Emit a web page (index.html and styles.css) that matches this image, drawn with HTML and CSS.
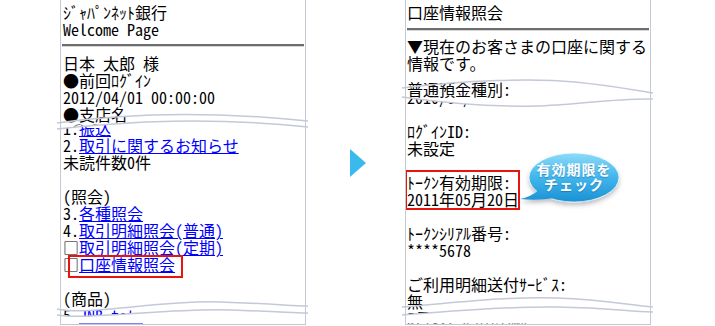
FILE: index.html
```html
<!DOCTYPE html>
<html lang="ja">
<head>
  <meta charset="UTF-8" />
  <meta name="viewport" content="width=device-width, initial-scale=1.0"/>
  <title>口座情報照会</title>
  <link rel="stylesheet" href="styles.css">
</head>
<body>

  <div class="stage">

    <!-- before: menu screen -->
    <div class="phone">
      <div class="seg seg-l-top">
        <div class="row">ｼﾞｬﾊﾟﾝﾈｯﾄ銀行</div>
        <div class="row">Welcome Page</div>
        <hr class="rule rule-l">
        <div class="row">日本 太郎 様</div>
        <div class="row">●前回ﾛｸﾞｲﾝ</div>
        <div class="row">2012/04/01 00:00:00</div>
        <div class="row">●支店名</div>
        <div class="row">&nbsp;○○営業部 (ｲﾁ)</div>
      </div>
      <div class="seg seg-l-bottom">
        <div class="row">1.<a href="#">振込</a></div>
        <div class="row">2.<a href="#">取引に関するお知らせ</a></div>
        <div class="row">未読件数0件</div>
        <div class="row-blank"></div>
        <div class="row">(照会)</div>
        <div class="row">3.<a href="#">各種照会</a></div>
        <div class="row">4.<a href="#">取引明細照会(普通)</a></div>
        <div class="row">□<a href="#">取引明細照会(定期)</a></div>
        <div class="row marked">□<a href="#">口座情報照会</a><span class="mark mark-link"></span></div>
        <div class="row-blank"></div>
        <div class="row">(商品)</div>
        <div class="row">5.<a href="#">JNB-toto</a></div>
      </div>

      <svg class="tear" width="252" height="326" viewBox="0 0 252 326">
        <path class="tear-line" d="M-3,123 C60,114 140,110 248,121"/>
        <path class="tear-line" d="M-3,129 C70,121 150,117 248,127"/>
        <path class="tear-fill" d="M-3,315 C30,320 110,308 170,310 S230,313 248,313 L248,323.5 L-3,323.5 Z"/>
        <path class="tear-line" d="M-3,309 C30,316 100,300 160,302 S230,306 248,306"/>
        <path class="tear-line" d="M-3,315 C30,320 110,308 170,310 S230,313 248,313"/>
        <path class="tear-side" d="M0.5,312 V324 M245.5,312 V324"/>
      </svg>
    </div>

    <div class="arrow"></div>

    <!-- after: account info screen -->
    <div class="phone">
      <div class="seg seg-r-top">
        <div class="row">口座情報照会</div>
        <hr class="rule rule-r">
        <div class="row">▼現在のお客さまの口座に関する</div>
        <div class="row">情報です。</div>
        <div class="row-gap"></div>
        <div class="row">普通預金種別:</div>
      </div>
      <div class="seg seg-r-bottom">
        <div class="row">2010/04/01</div>
        <div class="row-blank"></div>
        <div class="row">ﾛｸﾞｲﾝID:</div>
        <div class="row">未設定</div>
        <div class="row-blank"></div>
        <div class="marked">
          <div class="row">ﾄｰｸﾝ有効期限:</div>
          <div class="row">2011年05月20日</div>
          <span class="mark mark-date"></span>
        </div>
        <div class="row-blank"></div>
        <div class="row">ﾄｰｸﾝｼﾘｱﾙ番号:</div>
        <div class="row">****5678</div>
        <div class="row-blank"></div>
        <div class="row">ご利用明細送付ｻｰﾋﾞｽ:</div>
        <div class="row">無</div>
        <div class="row">5月のご利用明細</div>
      </div>

      <svg class="tear" width="252" height="326" viewBox="0 0 252 326">
        <path class="tear-line" d="M-3,88 C60,80 130,78 170,82 S230,90 248,93"/>
        <path class="tear-line" d="M-3,97 C40,103 90,107 130,106 S210,98 248,99"/>
        <path class="tear-fill" d="M-3,315 C40,312 100,306 152,307 S220,311 248,312 L248,323.5 L-3,323.5 Z"/>
        <path class="tear-line" d="M-3,307 C40,304 100,296 152,298 S220,305 248,307"/>
        <path class="tear-line" d="M-3,315 C40,312 100,306 152,307 S220,311 248,312"/>
        <path class="tear-side" d="M0.5,310 V324 M245.5,310 V324"/>
      </svg>
    </div>

    <!-- callout -->
    <svg class="bubble" width="120" height="76" viewBox="0 0 120 76">
      <defs>
        <linearGradient id="bubbleFill" gradientUnits="userSpaceOnUse" x1="0" y1="5" x2="0" y2="55">
          <stop offset="0" stop-color="#8edbf8"/>
          <stop offset="0.45" stop-color="#45b9ee"/>
          <stop offset="1" stop-color="#1890d3"/>
        </linearGradient>
        <filter id="bubbleShadow" x="-20%" y="-20%" width="140%" height="160%">
          <feDropShadow dx="0" dy="3" stdDeviation="2" flood-color="#404a5a" flood-opacity="0.35"/>
        </filter>
      </defs>
      <g filter="url(#bubbleShadow)">
        <ellipse cx="59" cy="29.5" rx="45" ry="24.5" fill="url(#bubbleFill)" stroke="#ffffff" stroke-opacity="0.7"/>
        <path d="M25,41 Q16,49 5,51 Q22,53 40,50 Z" fill="url(#bubbleFill)"/>
      </g>
    </svg>
    <div class="bubble-text">有効期限を<br>チェック</div>

  </div>

</body>
</html>
```

FILE: styles.css
```css
body {
  margin: 0;
  background: #fff;
  font-family: "Noto Sans CJK JP", sans-serif;
}

.stage {
  position: relative;
  display: flex;
  align-items: flex-start;
  width: 715px;
  height: 326px;
  padding-left: 60px;
  box-sizing: border-box;
  overflow: hidden;
}

.phone {
  position: relative;
  width: 246px;
  height: 325px;
  box-sizing: border-box;
  border-left: 1px solid #c4c9d6;
  border-right: 1px solid #c4c9d6;
  border-bottom: 1px solid #c4c9d6;
  font-size: 16px;
  line-height: 17px;
  color: #000;
  /* half-width latin, like a handset font */
  font-feature-settings: "hwid";
}

.seg {
  overflow: hidden;
  padding-left: 2px;
}

.row {
  white-space: nowrap;
}

.row a {
  color: #0000ff;
  text-decoration: underline;
}

.row-blank {
  height: 17px;
}

.row-gap {
  height: 9px;
}

.rule {
  height: 0;
  border: 0;
  border-top: 2px solid #6e6e6e;
  border-bottom: 1px solid #d2d2d2;
}

.rule-l {
  margin: 6px 1px 8px -1px;
}

.rule-r {
  margin: 7px 1px 7px 0;
}

/* left screen, cut by the tear */
.seg-l-top {
  height: 132px;
  padding-top: 4px;
  box-sizing: border-box;
  clip-path: path("M-4,0 L250,0 L250,127 L247,127 C149,117 69,121 -4,129 Z");
}

.seg-l-bottom {
  margin-top: -17px;
  height: 209px;
  padding-top: 5px;
  box-sizing: border-box;
  clip-path: path("M-4,14 C69,6 149,2 247,12 L250,12 L250,400 L-4,400 Z");
}

/* right screen */
.seg-r-top {
  height: 108px;
  padding-top: 4px;
  padding-left: 1px;
  box-sizing: border-box;
  clip-path: path("M-4,0 L250,0 L250,99 L247,99 C209,98 169,105 129,106 C89,107 39,103 -4,97 Z");
}

.seg-r-bottom {
  margin-top: -22px;
  height: 238px;
  padding-top: 3px;
  padding-left: 1px;
  box-sizing: border-box;
  clip-path: path("M-4,11 C39,17 89,21 129,20 C169,19 209,12 247,13 L250,13 L250,400 L-4,400 Z");
}

.tear {
  position: absolute;
  top: 0;
  left: -1px;
  overflow: visible;
  pointer-events: none;
}

.tear-line {
  fill: none;
  stroke: #c3c9d8;
  stroke-width: 1.5;
}

.tear-fill {
  fill: #fff;
}

.tear-side {
  fill: none;
  stroke: #c4c9d6;
  stroke-width: 1;
}

/* red highlight boxes */
.marked {
  position: relative;
}

.mark {
  position: absolute;
  border: 2px solid #e8150e;
  box-sizing: border-box;
}

.mark-link {
  left: 5px;
  top: -1px;
  width: 115px;
  height: 23px;
}

.mark-date {
  left: -2px;
  top: -4px;
  width: 115px;
  height: 40px;
}

.arrow {
  align-self: center;
  width: 0;
  height: 0;
  margin: 0 39px 0 44px;
  border-top: 14px solid transparent;
  border-bottom: 14px solid transparent;
  border-left: 16px solid #3cb9ec;
}

.bubble {
  position: absolute;
  left: 515px;
  top: 148px;
  overflow: visible;
}

.bubble-text {
  position: absolute;
  left: 530px;
  top: 162px;
  width: 88px;
  text-align: center;
  color: #fff;
  font-size: 14px;
  font-weight: bold;
  line-height: 15px;
  letter-spacing: 1px;
  text-shadow: 0 1px 1px rgba(0, 60, 110, 0.35);
}
```
